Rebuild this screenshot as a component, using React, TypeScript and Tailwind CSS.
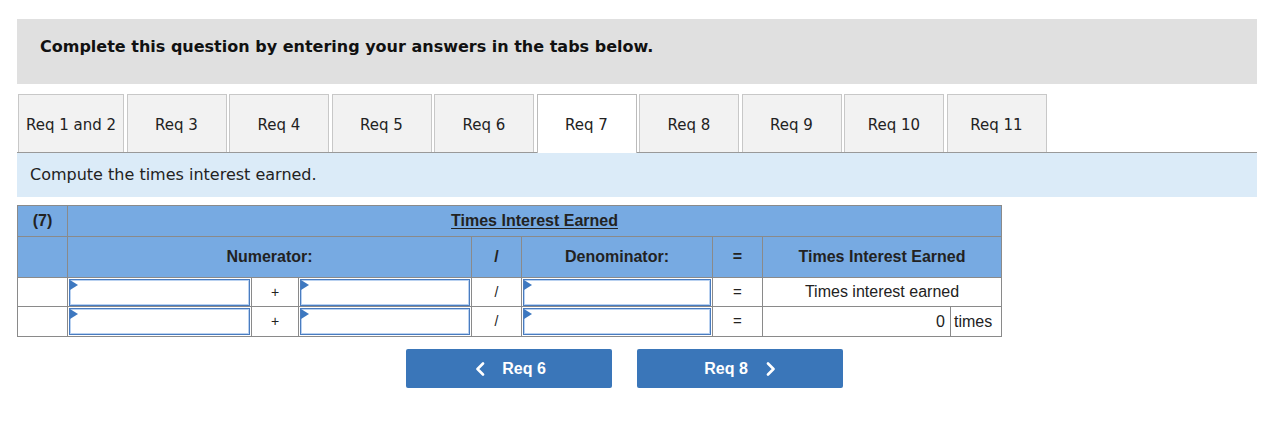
import React from "react";

const tabs = ["Req 1 and 2", "Req 3", "Req 4", "Req 5", "Req 6", "Req 7", "Req 8", "Req 9", "Req 10", "Req 11"];

function AnswerInput() {
  return (
    <div className="relative h-[27px] w-full border border-[#4a7cbf] bg-white shadow-[inset_0_0_0_1px_#b9d1f0]">
      <span className="absolute left-0 top-0 h-0 w-0 border-y-[5px] border-l-[8px] border-y-transparent border-l-[#3d78c0]" />
    </div>
  );
}

function Chevron({ dir }: { dir: "left" | "right" }) {
  return (
    <svg width="10" height="14" viewBox="0 0 10 14" fill="none">
      <polyline
        points={dir === "left" ? "8,1.5 2.5,7 8,12.5" : "2,1.5 7.5,7 2,12.5"}
        stroke="white"
        strokeWidth="2.6"
        strokeLinecap="round"
        strokeLinejoin="round"
      />
    </svg>
  );
}

export default function App() {
  const cell = "border border-[#8a8a8a]";
  return (
    <div className="min-h-[444px] w-[1272px] bg-white pl-[17px] pr-[15px] pt-[19px] text-[#1a1a1a]">
      <div className="h-[65px] bg-[#e0e0e0] pl-[23px] pt-[16px] font-['Verdana','DejaVu_Sans',sans-serif] text-[16px] font-bold text-[#111]">
        Complete this question by entering your answers in the tabs below.
      </div>

      <div className="mt-[10px] flex h-[59px] items-stretch gap-[2.5px] border-b border-[#999] pl-[1px] font-['Verdana','DejaVu_Sans',sans-serif] text-[15px] text-[#222]">
        {tabs.map((t, i) => {
          const active = t === "Req 7";
          return (
            <div
              key={t}
              className={
                "flex items-center justify-center border border-b-0 pt-[3px] " +
                (i === 0 ? "w-[106px] " : "w-[100px] ") +
                (active ? "-mb-px border-[#bbb] bg-white" : "border-[#c8c8c8] bg-[#f2f2f2]")
              }
            >
              {t}
            </div>
          );
        })}
      </div>

      <div className="flex h-[44px] items-center bg-[#dbebf8] pl-[13px] font-['Verdana','DejaVu_Sans',sans-serif] text-[16px] text-[#222]">
        Compute the times interest earned.
      </div>

      <table className="mt-[8px] w-[984px] table-fixed border-collapse font-['Liberation_Sans',Arial,sans-serif] text-[16px] text-[#222]">
        <colgroup>
          <col className="w-[50px]" />
          <col className="w-[184px]" />
          <col className="w-[47px]" />
          <col className="w-[173px]" />
          <col className="w-[50px]" />
          <col className="w-[191px]" />
          <col className="w-[50px]" />
          <col className="w-[188px]" />
          <col className="w-[51px]" />
        </colgroup>
        <tbody>
          <tr className="h-[31px] bg-[#77aae2] font-bold">
            <td className={cell + " text-center"}>(7)</td>
            <td className={cell + " text-center"} colSpan={8}>
              <span className="underline underline-offset-2">Times Interest Earned</span>
            </td>
          </tr>
          <tr className="h-[41px] bg-[#77aae2] font-bold">
            <td className={cell}></td>
            <td className={cell + " text-center"} colSpan={3}>Numerator:</td>
            <td className={cell + " text-center"}>/</td>
            <td className={cell + " text-center"}>Denominator:</td>
            <td className={cell + " text-center"}>=</td>
            <td className={cell + " text-center"} colSpan={2}>Times Interest Earned</td>
          </tr>
          {[0, 1].map((r) => (
            <tr key={r} className={r === 0 ? "h-[29px]" : "h-[30px]"}>
              <td className={cell}></td>
              <td className={cell + " p-0 px-px"}><AnswerInput /></td>
              <td className={cell + " text-center text-[14px]"}>+</td>
              <td className={cell + " p-0 px-px"}><AnswerInput /></td>
              <td className={cell + " text-center text-[14px]"}>/</td>
              <td className={cell + " p-0 px-px"}><AnswerInput /></td>
              <td className={cell + " text-center text-[15px]"}>=</td>
              {r === 0 ? (
                <td className={cell + " text-center"} colSpan={2}>Times interest earned</td>
              ) : (
                <>
                  <td className={cell + " pr-[5px] text-right"}>0</td>
                  <td className={cell + " pl-[3px]"}>times</td>
                </>
              )}
            </tr>
          ))}
        </tbody>
      </table>

      <div className="mt-[12px] flex gap-[25px] pl-[389px] font-['Liberation_Sans',Arial,sans-serif] text-[16px] font-bold text-white">
        <button className="flex h-[39px] w-[206px] items-center justify-center gap-[17px] rounded-[2px] bg-[#3a76b9] pl-[3px]">
          <Chevron dir="left" />
          <span>Req 6</span>
        </button>
        <button className="flex h-[39px] w-[206px] items-center justify-center gap-[18px] rounded-[2px] bg-[#3a76b9]">
          <span>Req 8</span>
          <Chevron dir="right" />
        </button>
      </div>
    </div>
  );
}
